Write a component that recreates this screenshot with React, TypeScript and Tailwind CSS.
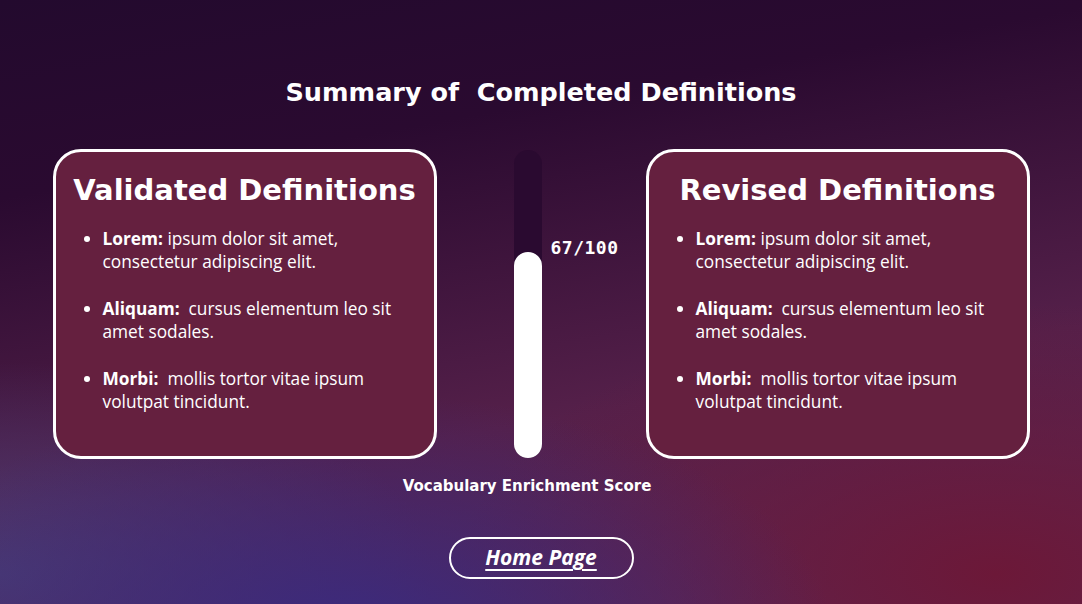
import React from "react";

const items = [
  { k: "Lorem:", v: " ipsum dolor sit amet, consectetur adipiscing elit." },
  { k: "Aliquam:", v: "  cursus elementum leo sit amet sodales." },
  { k: "Morbi:", v: "  mollis tortor vitae ipsum volutpat tincidunt." },
];

function Card({ title }: { title: string }) {
  return (
    <div className="w-[384px] h-[310px] rounded-[28px] border-[3px] border-white bg-[#65203f] pt-[18px]">
      <h2 className="text-center text-white font-['DejaVu_Sans',sans-serif] font-bold text-[29px] leading-[40px]">
        {title}
      </h2>
      <ul className="mt-[17px] pl-[47px] pr-[20px] flex flex-col gap-[24px] font-['Open_Sans',sans-serif] text-[17.3px] leading-[23px] text-white list-disc">
        {items.map((it) => (
          <li key={it.k} className="whitespace-pre-wrap">
            <b className="font-bold">{it.k}</b>
            {it.v}
          </li>
        ))}
      </ul>
    </div>
  );
}

export default function App() {
  return (
    <div className="w-[1082px] h-[604px] overflow-hidden bg-[radial-gradient(ellipse_45%_40%_at_32%_105%,#3a2a7e_0%,rgba(58,42,126,0)_100%),radial-gradient(ellipse_50%_45%_at_92%_95%,#6c1838_0%,rgba(108,24,56,0)_100%),radial-gradient(ellipse_40%_35%_at_0%_95%,#4a3a72_0%,rgba(74,58,114,0)_100%),linear-gradient(170deg,#230a2e_0%,#2a0a30_25%,#55204a_65%,#5a2a58_100%)] flex flex-col items-center">
      <h1 className="mt-[76px] h-[32px] text-white font-['DejaVu_Sans',sans-serif] font-bold text-[25.5px] leading-[32px] whitespace-pre">
        Summary of  Completed Definitions
      </h1>
      <div className="mt-[41px] flex">
        <Card title="Validated Definitions" />
        <div className="w-[209px] flex">
          <div className="ml-[77px] w-[28px] h-[308px] mt-[1px] rounded-full bg-[#2a0a30] flex flex-col justify-end">
            <div className="h-[67%] rounded-full bg-white" />
          </div>
          <div className="ml-[9px] mt-[88px] text-white font-['DejaVu_Sans_Mono',monospace] font-bold text-[18px] leading-[22px] tracking-[0.5px]">
            67/100
          </div>
        </div>
        <Card title="Revised Definitions" />
      </div>
      <div className="mt-[17px] pr-[28px] text-white font-['DejaVu_Sans',sans-serif] font-bold text-[15px] leading-[20px]">
        Vocabulary Enrichment Score
      </div>
      <a
        href="#"
        className="mt-[41px] w-[185px] h-[42px] rounded-full border-2 border-white flex items-center justify-center text-white font-['Open_Sans',sans-serif] font-bold italic text-[21px] underline underline-offset-[4px] decoration-[2px]"
      >
        Home Page
      </a>
    </div>
  );
}
